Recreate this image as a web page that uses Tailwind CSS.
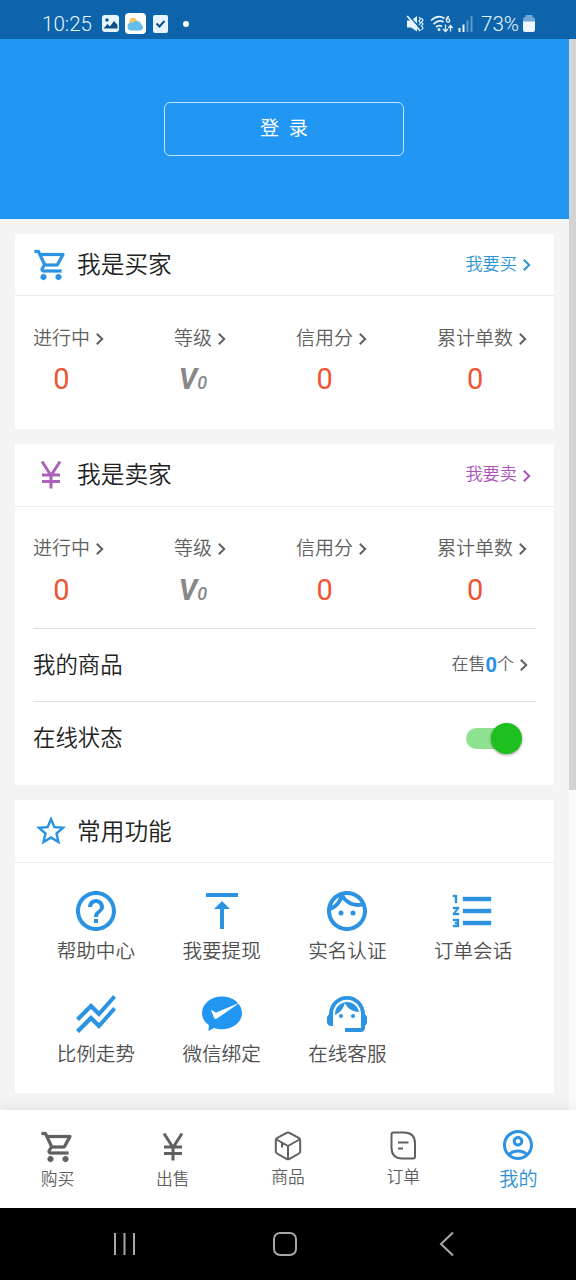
<!DOCTYPE html>
<html lang="zh-CN">
<head>
<meta charset="utf-8">
<title>我的</title>
<script src="https://cdn.jsdelivr.net/npm/@tailwindcss/browser@4"></script>
</head>
<body class="w-[576px] h-[1280px] overflow-hidden flex flex-col bg-[#f4f4f4] font-['Roboto','Noto_Sans_CJK_SC',sans-serif] font-[350] text-[#606060]">
<svg class="hidden">
  <symbol id="cart" viewBox="0 0 24 24"><path stroke="currentColor" stroke-width=".15" d="M15.550 13c.75 0 1.410-.41 1.750-1.030l3.580-6.490c.37-.66-.11-1.480-.87-1.480H5.210l-.94-2H1v2h2l3.600 7.590-1.350 2.440C4.520 15.370 5.480 17 7 17h12v-2H7l1.100-2h7.450zM6.160 6h12.150l-2.760 5H8.530L6.160 6zM7 18c-1.100 0-1.990.9-1.990 2S5.900 22 7 22s2-.9 2-2-.9-2-2-2zm10 0c-1.100 0-1.990.9-1.990 2s.89 2 1.990 2 2-.9 2-2-.9-2-2-2z"/></symbol>
  <symbol id="yen" viewBox="0 0 36 36"><path d="M9 4.500l9 14L27 4.500M9 18h18M9 24.500h18M18 17.500v14" fill="none" stroke="currentColor" stroke-width="3"/></symbol>
  <symbol id="chev" viewBox="0 0 12 16"><path d="M2.800 2.800L8.200 8l-5.400 5.200" fill="none" stroke="currentColor" stroke-width="2"/></symbol>
</svg>

<header class="h-[39px] shrink-0 bg-[#0d64ab] text-[#e6f4ff] flex items-center pl-[42px] pr-[41px] pt-[8px]">
  <span class="text-[20.600px] leading-[30px] font-[350] w-[60px]">10:25</span>
  <svg class="w-[17px] h-[17px]" viewBox="0 0 17 17"><rect width="17" height="17" rx="3" fill="#e6f4ff"/><circle cx="5" cy="5" r="1.700" fill="#0d4f86"/><path d="M1.500 13.500l4-4.500 2.500 2.500L12 6l3.500 4v3.500z" fill="#0d4f86"/></svg>
  <svg class="w-[21px] h-[21px] ml-[6px]" viewBox="0 0 21 21"><rect width="21" height="21" rx="4" fill="#fff"/><circle cx="8" cy="8.500" r="3.800" fill="#fac55c"/><path d="M6.500 17.500a4 4 0 0 1 0-8q1 0 1.500.3a4.600 4.600 0 0 1 8.300 1.700a3.200 3.200 0 0 1-.8 6z" fill="#63bde8"/></svg>
  <svg class="w-[15px] h-[18px] ml-[7px]" viewBox="0 0 15 18"><rect width="15" height="18" rx="2" fill="#e6f4ff"/><path d="M3.500 8.500l3 3 5-5.500" fill="none" stroke="#0d4f86" stroke-width="2"/></svg>
  <span class="w-[6px] h-[6px] rounded-full bg-white ml-[15px]"></span>
  <svg class="w-[18px] h-[18px] ml-auto" viewBox="0 0 18 18"><path d="M1 5.500h4L11 1v15.500L5 12.500H1z" fill="currentColor"/><path d="M3.200 1l12 13.500" stroke="#0d64ab" stroke-width="1.500"/><path d="M1.200 1l13 15" stroke="currentColor" stroke-width="1.800"/><path d="M13 2l1.500 2-1.500 2 1.500 2-1.500 2M15.500 3L17 5l-1.500 2L17 9l-1.500 2 1.500 2-1.500 2" fill="none" stroke="currentColor" stroke-width="1.200"/></svg>
  <svg class="w-[24px] h-[18px] ml-[6px]" viewBox="0 0 24 18"><path d="M1 5.500Q8-1 14.500 3.500M3.500 9Q9 4 13.500 7M6 12q3-2.500 6-.5" fill="none" stroke="currentColor" stroke-width="1.700"/><circle cx="9" cy="14.500" r="1.500" fill="currentColor"/><path d="M19 1.500q-2.500.5-2.500 3.500" fill="none" stroke="currentColor" stroke-width="1.300"/><circle cx="18" cy="5.500" r="1.700" fill="none" stroke="currentColor" stroke-width="1.300"/><path d="M15.500 9.500v7m-2.500-2.500l2.500 2.500 2.500-2.500M20.500 16.500v-6m-2.200 2.500l2.200-2.500 2.200 2.500" fill="none" stroke="currentColor" stroke-width="1.300"/></svg>
  <svg class="w-[15px] h-[16px] ml-[4px]" viewBox="0 0 15 16"><path d="M1.500 12v4M5.500 8.500V16" stroke="currentColor" stroke-width="2"/><path d="M9.500 4.500V16M13.500 0v16" stroke="#5b97c9" stroke-width="2"/></svg>
  <span class="text-[20.600px] leading-[30px] font-[350] w-[40px] ml-[8px] mr-[2px]">73%</span>
  <svg class="w-[12px] h-[17px]" viewBox="0 0 12 17"><path d="M0 4.500Q0 2 2.500 2V0h7v2Q12 2 12 4.500V7H0z" fill="#6fa6d3"/><path d="M0 6.500h12V15q0 2-2 2H2q-2 0-2-2z" fill="#eff8ff"/></svg>
</header>

<div class="flex h-[1071px] shrink-0 overflow-hidden">
  <main class="w-[569px] shrink-0">
    <section class="h-[180px] bg-[#2196f3] flex justify-center pt-[63px] pr-px">
      <button class="w-[240px] h-[54px] rounded-[6px] border border-[#c5e5fd] text-white text-[19.200px] font-normal leading-[52px] text-center">登&nbsp; 录</button>
    </section>

    <div class="px-[15px] pt-[15px] flex flex-col gap-[15px]">
      <section class="bg-white h-[195px]">
        <div class="h-[62px] border-b border-[#ececec] flex items-center pl-[18px] pr-[21px]">
          <svg class="w-[36px] h-[36px] fill-[#2b93e2] text-[#2b93e2]"><use href="#cart"/></svg>
          <h2 class="ml-[8px] text-[23.700px] leading-[36px] text-[#222]">我是买家</h2>
          <a class="ml-auto flex items-center text-[17.200px] text-[#2b93d8]">我要买<svg class="w-[12px] h-[16px] ml-[4px] mt-[2px]"><use href="#chev"/></svg></a>
        </div>
        <div class="flex gap-[68px] pl-[18px] pt-[28px]">
          <div class="flex items-start"><div class="flex flex-col items-center"><span class="text-[19px] leading-[30px]">进行中</span><span class="text-[29px] leading-[34px] mt-[8px] font-normal text-[#ee5535]">0</span></div><svg class="w-[12px] h-[16px] ml-[4px] mt-[7px]"><use href="#chev"/></svg></div>
          <div class="flex items-start"><div class="flex flex-col items-center"><span class="text-[19px] leading-[30px]">等级</span><span class="text-[29px] leading-[34px] mt-[8px] font-bold italic text-[#888]">V<span class="text-[18px] font-medium">0</span></span></div><svg class="w-[12px] h-[16px] ml-[4px] mt-[7px]"><use href="#chev"/></svg></div>
          <div class="flex items-start"><div class="flex flex-col items-center"><span class="text-[19px] leading-[30px]">信用分</span><span class="text-[29px] leading-[34px] mt-[8px] font-normal text-[#ee5535]">0</span></div><svg class="w-[12px] h-[16px] ml-[4px] mt-[7px]"><use href="#chev"/></svg></div>
          <div class="flex items-start"><div class="flex flex-col items-center"><span class="text-[19px] leading-[30px]">累计单数</span><span class="text-[29px] leading-[34px] mt-[8px] font-normal text-[#ee5535]">0</span></div><svg class="w-[12px] h-[16px] ml-[4px] mt-[7px]"><use href="#chev"/></svg></div>
        </div>
      </section>

      <section class="bg-white h-[341px]">
        <div class="h-[63px] border-b border-[#ececec] flex items-center pl-[18px] pr-[21px]">
          <svg class="w-[36px] h-[36px] text-[#ad62b9]"><use href="#yen"/></svg>
          <h2 class="ml-[8px] text-[23.700px] leading-[36px] text-[#222]">我是卖家</h2>
          <a class="ml-auto flex items-center text-[17.200px] text-[#ad52bb]">我要卖<svg class="w-[12px] h-[16px] ml-[4px] mt-[2px]"><use href="#chev"/></svg></a>
        </div>
        <div class="flex gap-[68px] pl-[18px] pt-[27px] h-[121px]">
          <div class="flex items-start"><div class="flex flex-col items-center"><span class="text-[19px] leading-[30px]">进行中</span><span class="text-[29px] leading-[34px] mt-[9px] font-normal text-[#ee5535]">0</span></div><svg class="w-[12px] h-[16px] ml-[4px] mt-[7px]"><use href="#chev"/></svg></div>
          <div class="flex items-start"><div class="flex flex-col items-center"><span class="text-[19px] leading-[30px]">等级</span><span class="text-[29px] leading-[34px] mt-[9px] font-bold italic text-[#888]">V<span class="text-[18px] font-medium">0</span></span></div><svg class="w-[12px] h-[16px] ml-[4px] mt-[7px]"><use href="#chev"/></svg></div>
          <div class="flex items-start"><div class="flex flex-col items-center"><span class="text-[19px] leading-[30px]">信用分</span><span class="text-[29px] leading-[34px] mt-[9px] font-normal text-[#ee5535]">0</span></div><svg class="w-[12px] h-[16px] ml-[4px] mt-[7px]"><use href="#chev"/></svg></div>
          <div class="flex items-start"><div class="flex flex-col items-center"><span class="text-[19px] leading-[30px]">累计单数</span><span class="text-[29px] leading-[34px] mt-[9px] font-normal text-[#ee5535]">0</span></div><svg class="w-[12px] h-[16px] ml-[4px] mt-[7px]"><use href="#chev"/></svg></div>
        </div>
        <div class="mx-[18px] h-[73px] border-t border-[#dedede] flex items-center pr-[6px]">
          <span class="text-[22.400px] text-[#222] pt-[2px]">我的商品</span>
          <span class="ml-auto text-[17px] flex items-center">在售<b class="text-[20px] font-bold text-[#2b93e2]">0</b>个<svg class="w-[12px] h-[16px] ml-[4px]"><use href="#chev"/></svg></span>
        </div>
        <div class="mx-[18px] h-[73px] border-t border-[#dedede] flex items-center pr-[14px]">
          <span class="text-[22.400px] text-[#222] pt-[2px]">在线状态</span>
          <span class="ml-auto w-[56px] h-[31px] flex items-center"><span class="w-[51px] h-[21px] rounded-full bg-[#8fe292]"></span><span class="-ml-[26px] w-[31px] h-[31px] shrink-0 rounded-full bg-[#1dc01f] shadow-[0_1px_3px_rgba(0,0,0,0.4)]"></span></span>
        </div>
      </section>

      <section class="bg-white h-[293px]">
        <div class="h-[63px] border-b border-[#ececec] flex items-center pl-[18px]">
          <svg class="w-[36px] h-[36px] fill-[#2b93e2]" viewBox="0 0 24 24"><path d="M22 9.240l-7.190-.62L12 2 9.190 8.630 2 9.240l5.460 4.730L5.820 21 12 17.270 18.180 21l-1.630-7.030L22 9.240zM12 15.400l-3.760 2.270 1-4.280-3.320-2.880 4.380-.38L12 6.100l1.710 4.040 4.380.38-3.320 2.880 1 4.280L12 15.400z"/></svg>
          <h2 class="ml-[8px] text-[23.700px] leading-[36px] text-[#222] pt-px">常用功能</h2>
        </div>
        <div class="grid grid-cols-4 px-[18px] pt-[24px] auto-rows-[103px] text-[19.600px] leading-[34px] text-[#505050] fill-[#2b93e2]">
          <div class="flex flex-col items-center"><svg class="w-[48px] h-[48px]" viewBox="0 0 24 24"><path d="M11 18h2v-2h-2v2zm1-16C6.480 2 2 6.480 2 12s4.480 10 10 10 10-4.480 10-10S17.520 2 12 2zm0 18c-4.410 0-8-3.590-8-8s3.590-8 8-8 8 3.590 8 8-3.590 8-8 8zm0-14c-2.210 0-4 1.790-4 4h2c0-1.100.9-2 2-2s2 .9 2 2c0 2-3 1.750-3 5h2c0-2.250 3-2.500 3-5 0-2.210-1.790-4-4-4z"/></svg><span>帮助中心</span></div>
          <div class="flex flex-col items-center"><svg class="w-[48px] h-[48px]" viewBox="0 0 24 24"><path d="M8 11h3v10h2V11h3l-4-4-4 4zM4 3v2h16V3H4z"/></svg><span>我要提现</span></div>
          <div class="flex flex-col items-center"><svg class="w-[48px] h-[48px]" viewBox="0 0 24 24"><circle cx="9" cy="13" r="1.250"/><circle cx="15" cy="13" r="1.250"/><path d="M22 12c0 5.520-4.480 10-10 10S2 17.520 2 12 6.480 2 12 2s10 4.480 10 10zM10.660 4.120C12.060 6.440 14.600 8 17.500 8c.46 0 .91-.05 1.340-.12C17.440 5.560 14.900 4 12 4c-.46 0-.91.05-1.340.12zM4.420 9.470c1.710-.97 3.030-2.550 3.660-4.440C6.370 6 5.050 7.580 4.420 9.470zM20 12c0-.78-.12-1.530-.33-2.240-.7.15-1.420.24-2.170.24-3.130 0-5.920-1.440-7.760-3.690C8.690 8.870 6.600 10.880 4 11.860c.01.04 0 .09 0 .14 0 4.420 3.580 8 8 8s8-3.580 8-8z" fill-rule="evenodd"/></svg><span>实名认证</span></div>
          <div class="flex flex-col items-center"><svg class="w-[48px] h-[48px]" viewBox="0 0 24 24"><path stroke="#2b93e2" stroke-width=".2" d="M2 17h2v.5H3v1h1v.5H2v1h3v-4H2v1zm1-9h1V4H2v1h1v3zm-1 3h1.800L2 13.100v.9h3v-1H3.200L5 10.900V10H2v1zm5-6v2h14V5H7zm0 14h14v-2H7v2zm0-6h14v-2H7v2z"/></svg><span>订单会话</span></div>
          <div class="flex flex-col items-center"><svg class="w-[48px] h-[48px]" viewBox="0 0 24 24"><path d="M2 19.990l7.500-7.510 4 4 7.090-7.970L22 9.920l-8.500 9.560-4-4-6 6.010L2 19.990zm1.500-4.500l6-6.010 4 4L22 3.920l-1.410-1.410-7.090 7.970-4-4L2 13.990l1.500 1.500z"/></svg><span>比例走势</span></div>
          <div class="flex flex-col items-center"><svg class="w-[48px] h-[48px] fill-[#2196f3]" viewBox="0 0 48 48"><path d="M24 6.500C13 6.500 4 13.800 4 23c0 5 2.700 9.300 7 12.300L10.300 41l5.800-3.100c2.400.9 5 1.300 7.900 1.300 11 0 20-7 20-16.200S35 6.500 24 6.500z"/><path d="M12.800 19.500l4.400 2.800q.8.500 1.700 0L42 12.500 19 28.500q-2 1.200-3-.8z" fill="#fff"/></svg><span>微信绑定</span></div>
          <div class="flex flex-col items-center"><svg class="w-[48px] h-[48px]" viewBox="0 0 24 24"><path d="M21 12.220C21 6.730 16.740 3 12 3c-4.690 0-9 3.650-9 9.280-.6.34-1 .98-1 1.720v2c0 1.100.9 2 2 2h1v-6.100c0-3.870 3.130-7 7-7s7 3.130 7 7V19h-8v2h8c1.100 0 2-.9 2-2v-1.220c.59-.31 1-.92 1-1.640v-2.300c0-.7-.41-1.310-1-1.620z"/><circle cx="9" cy="13" r="1"/><circle cx="15" cy="13" r="1"/><path d="M18 11.030C17.520 8.180 15.040 6 12.050 6c-3.030 0-6.290 2.510-6.030 6.450 2.470-1.010 4.330-3.210 4.860-5.890 1.310 2.630 4 4.440 7.120 4.470z"/></svg><span>在线客服</span></div>
        </div>
      </section>
    </div>
  </main>
  <div class="w-[7px] bg-[#fafafa]"><div class="h-[751px] bg-[#d3d3d3]"></div></div>
</div>

<nav class="h-[98px] shrink-0 bg-white grid grid-cols-5 text-[16.800px] leading-[29px] z-10 shadow-[0_-2px_14px_rgba(0,0,0,0.08)]">
  <div class="flex flex-col items-center pt-[19px]"><svg class="w-[36px] h-[36px] fill-[#606060]"><use href="#cart"/></svg><span>购买</span></div>
  <div class="flex flex-col items-center pt-[19px]"><svg class="w-[36px] h-[36px]"><use href="#yen"/></svg><span>出售</span></div>
  <div class="flex flex-col items-center pt-[19px]"><svg class="w-[32px] h-[34px]" viewBox="0 0 32 34" fill="none" stroke="#606060" stroke-width="2" stroke-linejoin="round"><path d="M14.500 3.800q1.500-.8 3 0l9.500 5.400q1.200.8 1.200 2.200v10.900q0 1.400-1.200 2.200l-9.500 5.400q-1.500.8-3 0L5 24.500q-1.200-.8-1.200-2.200V11.400q0-1.400 1.200-2.200zM4.500 10.500L16 17l11.500-6.500M16 17v13M10 14v4.500"/></svg><span>商品</span></div>
  <div class="flex flex-col items-center pt-[19px]"><svg class="w-[32px] h-[34px]" viewBox="0 0 32 34" fill="none" stroke="#606060" stroke-width="2"><path d="M6.500 3.500H17q11 0 11 11v13q0 2-2 2H15.500q-11 0-11-11v-13q0-2 2-2zM11 13.500h10.500M11 19.500h5"/></svg><span>订单</span></div>
  <div class="flex flex-col items-center pt-[17px] text-[19.200px] text-[#2b8fd8]"><svg class="w-[36px] h-[36px] fill-[#2b93e2]" viewBox="0 0 24 24"><path d="M12 2C6.480 2 2 6.480 2 12s4.480 10 10 10 10-4.480 10-10S17.520 2 12 2zM7.350 18.500C8.660 17.560 10.260 17 12 17s3.340.56 4.650 1.500c-1.310.94-2.910 1.500-4.650 1.500s-3.340-.56-4.650-1.500zm10.790-1.380C16.450 15.800 14.320 15 12 15s-4.450.8-6.140 2.120C4.700 15.730 4 13.950 4 12c0-4.420 3.580-8 8-8s8 3.580 8 8c0 1.950-.7 3.730-1.860 5.120zM12 6c-1.930 0-3.500 1.570-3.500 3.500S10.070 13 12 13s3.500-1.570 3.500-3.500S13.930 6 12 6zm0 5c-.83 0-1.500-.67-1.500-1.500S11.170 8 12 8s1.500.67 1.500 1.500S12.830 11 12 11z"/></svg><span class="leading-[34px]">我的</span></div>
</nav>

<footer class="h-[72px] shrink-0 bg-black flex items-center pl-[113px]">
  <svg class="w-[24px] h-[24px]" viewBox="0 0 24 24" stroke="#a8a8a8" stroke-width="2"><path d="M2 1v22M11.500 1v22M21 1v22"/></svg>
  <svg class="w-[26px] h-[26px] ml-[135px]" viewBox="0 0 26 26"><rect x="2" y="2" width="22" height="22" rx="6" fill="none" stroke="#a8a8a8" stroke-width="2"/></svg>
  <svg class="w-[16px] h-[26px] ml-[141px]" viewBox="0 0 16 26"><path d="M14 1.500L2 13l12 11.500" fill="none" stroke="#a8a8a8" stroke-width="2"/></svg>
</footer>
</body>
</html>
